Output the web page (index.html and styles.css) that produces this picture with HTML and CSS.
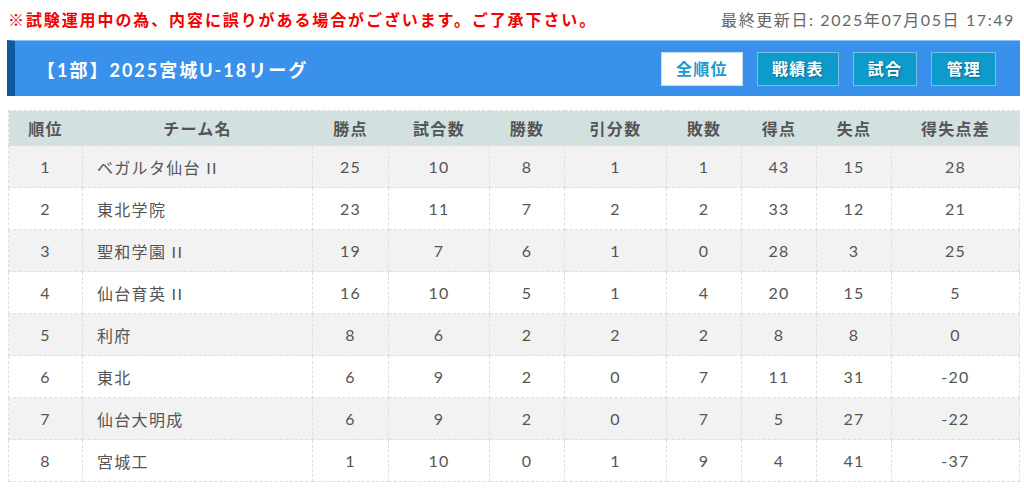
FILE: index.html
```html
<!DOCTYPE html>
<html lang="ja">
<head>
  <meta charset="UTF-8" />
  <meta name="viewport" content="width=device-width, initial-scale=1.0" />
  <title>順位表 - 2025宮城U-18リーグ</title>
  <link rel="stylesheet" href="styles.css">
</head>
<body>
  <div class="topline">
    <p class="notice">※試験運用中の為、内容に誤りがある場合がございます。ご了承下さい。</p>
    <p class="updated">最終更新日: 2025年07月05日 17:49</p>
  </div>

  <div class="league-bar">
    <h1>【1部】2025宮城U-18リーグ</h1>
    <nav class="menu">
      <a href="#" class="menu-btn active">全順位</a>
      <a href="#" class="menu-btn">戦績表</a>
      <a href="#" class="menu-btn">試合</a>
      <a href="#" class="menu-btn">管理</a>
    </nav>
  </div>

  <table class="standings">
    <colgroup>
      <col style="width:74px">
      <col style="width:230px">
      <col style="width:76px">
      <col style="width:101px">
      <col style="width:75px">
      <col style="width:102px">
      <col style="width:75px">
      <col style="width:75px">
      <col style="width:75px">
      <col>
    </colgroup>
    <thead>
      <tr>
        <th>順位</th><th>チーム名</th><th>勝点</th><th>試合数</th><th>勝数</th>
        <th>引分数</th><th>敗数</th><th>得点</th><th>失点</th><th>得失点差</th>
      </tr>
    </thead>
    <tbody>
      <tr><td>1</td><td class="team">ベガルタ仙台 II</td><td>25</td><td>10</td><td>8</td><td>1</td><td>1</td><td>43</td><td>15</td><td>28</td></tr>
      <tr><td>2</td><td class="team">東北学院</td><td>23</td><td>11</td><td>7</td><td>2</td><td>2</td><td>33</td><td>12</td><td>21</td></tr>
      <tr><td>3</td><td class="team">聖和学園 II</td><td>19</td><td>7</td><td>6</td><td>1</td><td>0</td><td>28</td><td>3</td><td>25</td></tr>
      <tr><td>4</td><td class="team">仙台育英 II</td><td>16</td><td>10</td><td>5</td><td>1</td><td>4</td><td>20</td><td>15</td><td>5</td></tr>
      <tr><td>5</td><td class="team">利府</td><td>8</td><td>6</td><td>2</td><td>2</td><td>2</td><td>8</td><td>8</td><td>0</td></tr>
      <tr><td>6</td><td class="team">東北</td><td>6</td><td>9</td><td>2</td><td>0</td><td>7</td><td>11</td><td>31</td><td>-20</td></tr>
      <tr><td>7</td><td class="team">仙台大明成</td><td>6</td><td>9</td><td>2</td><td>0</td><td>7</td><td>5</td><td>27</td><td>-22</td></tr>
      <tr><td>8</td><td class="team">宮城工</td><td>1</td><td>10</td><td>0</td><td>1</td><td>9</td><td>4</td><td>41</td><td>-37</td></tr>
    </tbody>
  </table>
</body>
</html>
```

FILE: styles.css
```css
body {
  font-family: Lato, 'Noto Sans CJK JP', sans-serif;
  background-color: #ffffff;
  color: #555;
  letter-spacing: 1.3px;
  margin: 0;
  padding: 0 4px 0 7px;
}
.topline {
  display: flex;
  justify-content: space-between;
  align-items: center;
  height: 40px;
  padding-left: 1px;
}
.topline p {
  margin: 0;
  font-size: 16px;
  line-height: 1;
}
.notice {
  color: #f20000;
  font-weight: bold;
  letter-spacing: 1.9px;
}
.updated {
  color: #666;
  letter-spacing: 1.6px;
  padding-right: 5px;
}
.league-bar {
  display: flex;
  align-items: center;
  justify-content: space-between;
  height: 55px;
  background-color: #3a91ec;
  border-left: 8px solid #0f5a9f;
  border-top: 1px solid #8cc2f5;
  padding: 0 24px 0 22px;
}
.league-bar h1 {
  margin: 0;
  color: white;
  font-size: 18px;
  font-weight: bold;
  letter-spacing: 2px;
}
.menu {
  display: flex;
  gap: 14px;
}
.menu-btn {
  display: block;
  height: 32px;
  line-height: 32px;
  padding: 0 14px;
  background-color: #0c9bcb;
  border: 1px solid #74bfe6;
  color: white;
  font-size: 16px;
  font-weight: bold;
  text-decoration: none;
  text-shadow: 1px 1px 2px rgba(0,0,0,0.35);
}
.menu-btn.active {
  background-color: white;
  color: #1a98cf;
  border-color: #c8dff2;
  text-shadow: none;
}
.standings {
  width: 1012px;
  margin-top: 14px;
  margin-left: 1px;
  border-collapse: collapse;
  table-layout: fixed;
  font-size: 16px;
}
.standings th,
.standings td {
  border: 1px dashed #dedede;
  text-align: center;
  padding: 0;
}
.standings th {
  height: 34px;
  background-color: #d3e0e0;
  font-weight: bold;
  color: #555;
}
.standings td {
  height: 41px;
  color: #555;
}
.standings tbody tr:nth-child(odd) {
  background-color: #f2f2f2;
}
.standings td.team {
  text-align: left;
  padding-left: 14px;
}
```
